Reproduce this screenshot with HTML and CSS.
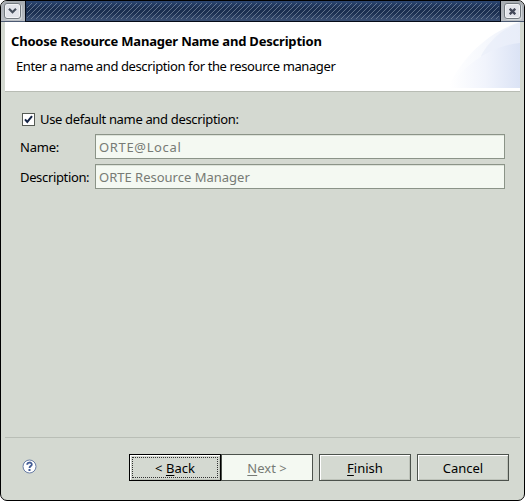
FILE: index.html
```html
<!DOCTYPE html>
<html lang="en">
<head>
<meta charset="utf-8">
<title>Choose Resource Manager Name and Description</title>
<link rel="stylesheet" href="styles.css">
</head>
<body>
<main class="window">
  <div class="titlebar">
    <button class="tb-btn" aria-label="Window menu"><svg width="9" height="6" viewBox="0 0 9 6"><path d="M1 .8 4.5 4.2 8 .8" fill="none" stroke="#454e5b" stroke-width="2.2"/></svg></button>
    <div class="grip"><svg width="100%" height="16"><defs><pattern id="stripes" width="5" height="5" patternUnits="userSpaceOnUse"><path d="M0 4h1v1H0zM1 3h1v1H1zM2 2h1v1H2zM3 1h1v1H3zM4 0h1v1H4z" fill="#7d8da3" fill-opacity=".7"/></pattern></defs><rect width="100%" height="16" fill="url(#stripes)"/></svg></div>
    <button class="tb-btn" aria-label="Close"><svg width="7" height="7" viewBox="0 0 7 7"><path d="M.7 .7 6.3 6.3M6.3 .7 .7 6.3" stroke="#454a5a" stroke-width="2.3"/></svg></button>
  </div>
  <header class="header">
    <div class="header-text">
      <h1><span class="t-title">Choose Resource Manager Name and Description</span></h1>
      <p><span class="t-sub">Enter a name and description for the resource manager</span></p>
    </div>
    <svg class="banner" width="75" height="66" viewBox="0 0 75 66">
      <defs>
        <linearGradient id="g1" x1="0" x2="1"><stop offset="0" stop-color="#fff"/><stop offset=".45" stop-color="#f7f9fd"/><stop offset="1" stop-color="#edf1fb"/></linearGradient>
        <linearGradient id="g2" gradientUnits="userSpaceOnUse" x1="5" x2="75" y1="0" y2="0"><stop offset="0" stop-color="#fff"/><stop offset=".5" stop-color="#f1f4fc"/><stop offset="1" stop-color="#dbe3f5"/></linearGradient>
      </defs>
      <path d="M3 66C15 38 42 10 75 0V66Z" fill="url(#g1)"/>
      <path d="M36 34C44 19 58 6 75 1V66H36Z" fill="#e4eaf8" opacity=".5"/>
      <path d="M3 66C20 43 45 24 75 21V66Z" fill="url(#g2)"/>
    </svg>
  </header>
  <section class="content">
    <label class="check"><span class="box"><svg width="11" height="11" viewBox="0 0 11 11"><path d="M2 5.3 4.3 8 9 2.2" fill="none" stroke="#142546" stroke-width="2"/></svg></span><span class="t-check">Use default name and description:</span></label>
    <div class="form">
      <span class="lbl"><span class="t-name">Name:</span></span><div class="field"><span class="t-local">ORTE@Local</span></div>
      <span class="lbl"><span class="t-desc">Description:</span></span><div class="field"><span class="t-orte">ORTE Resource Manager</span></div>
    </div>
  </section>
  <footer class="footer">
    <svg class="help" width="15" height="15" viewBox="0 0 15 15"><circle cx="7.5" cy="7.5" r="6.5" fill="#fff" stroke="#687da5"/><path d="M5.2 5.7C5.2 2.8 9.8 2.9 9.8 5.4 9.8 7 7.5 7.1 7.5 9" fill="none" stroke="#435d95" stroke-width="1.8"/><path d="M6.5 10h2v2h-2z" fill="#435d95"/></svg>
    <div class="pair">
      <button class="btn default"><span class="t-back">&lt; <u>B</u>ack</span></button>
      <button class="btn disabled"><span class="t-next"><u>N</u>ext &gt;</span></button>
    </div>
    <button class="btn"><span class="t-finish"><u>F</u>inish</span></button>
    <button class="btn"><span class="t-cancel">Cancel</span></button>
  </footer>
</main>
</body>
</html>
```
FILE: styles.css
```css
* { box-sizing: border-box; }
body { margin: 0; background: #fff; font: 13px/18px "Noto Sans", sans-serif; color: #000; }
.window { width: 525px; height: 501px; border: 1px solid #000; border-radius: 7px; background: #d4d9d1; overflow: hidden; display: flex; flex-direction: column; white-space: nowrap; }
.titlebar { height: 21px; flex: none; display: flex; justify-content: space-between; background: linear-gradient(#a6abb0, #b9bdc3); border-bottom: 1px solid #4c5a72; }
.tb-btn { width: 17px; height: 16px; margin: 2px 3px; padding: 0; display: flex; align-items: center; justify-content: center; border: 1px solid #737a80; border-radius: 3px; background: #e2e4ea; box-shadow: inset 0 0 0 1px #f3f4f6, 1px 1px 0 #d2d7da; flex: none; }
.tb-btn:first-child { margin-right: 4px; }
.grip { flex: 1; height: 21px; padding: 2px 1px; border: solid #050b17; border-width: 0 1px 1px; background: linear-gradient(#2b4672, #1b2f51 35%, #1b2f51 60%, #3d5276); }
.grip svg { display: block; }
.header { height: 70px; flex: none; margin: 0 4px; background: #fff; border-bottom: 1px solid #b8bcb4; display: flex; justify-content: space-between; }
.header-text { padding: 10px 0 0 6px; }
h1 { margin: 0; font-size: 13px; font-weight: 700; line-height: 18px; }
p { margin: 7px 0 0 5px; line-height: 18px; }
.t-title { letter-spacing: -0.2px; }
.t-sub { letter-spacing: -0.39px; }
.t-check { letter-spacing: -0.34px; }
.t-name { letter-spacing: -0.2px; }
.t-desc { letter-spacing: -0.35px; }
.t-local { letter-spacing: 0.65px; }
.content { flex: 1; padding: 18px 19px 0; }
.check { display: flex; align-items: center; height: 18px; margin-left: 2px; gap: 5px; }
.box { width: 13px; height: 13px; border: 1px solid #555b54; background: #fff; display: flex; }
.form { margin-top: 6px; display: grid; grid-template-columns: 75px 410px; grid-template-rows: 25px 25px; row-gap: 5px; }
.lbl { line-height: 26px; }
.field { border: 1px solid #8b9488; background: #f4f9f2; box-shadow: inset 0 1px 0 #dde3da; color: #777b75; padding-left: 3px; line-height: 25px; }
.footer { height: 63px; flex: none; margin: 0 4px; padding: 16px 11px 0 17px; border-top: 1px solid #b9beb6; display: flex; gap: 6px; }
.help { margin: 5px auto 0 0; }
.pair { display: flex; }
.btn { position: relative; width: 92px; height: 27px; padding: 0; border: 1px solid #4c524c; background: #d4d9d1; box-shadow: inset 1px 1px 0 #fff, inset -1px -1px 0 #bdc2b9; font: inherit; line-height: 26px; color: #000; text-align: center; }
.btn.default { border-color: #000; }
.btn.default::after { content: ""; position: absolute; inset: 2px; border: 1px dotted #333; }
.btn.disabled { background: #f4f9f2; color: #777b75; box-shadow: none; }
u { text-decoration: underline; text-underline-offset: 2px; text-decoration-thickness: 1px; text-decoration-skip-ink: none; }
```
